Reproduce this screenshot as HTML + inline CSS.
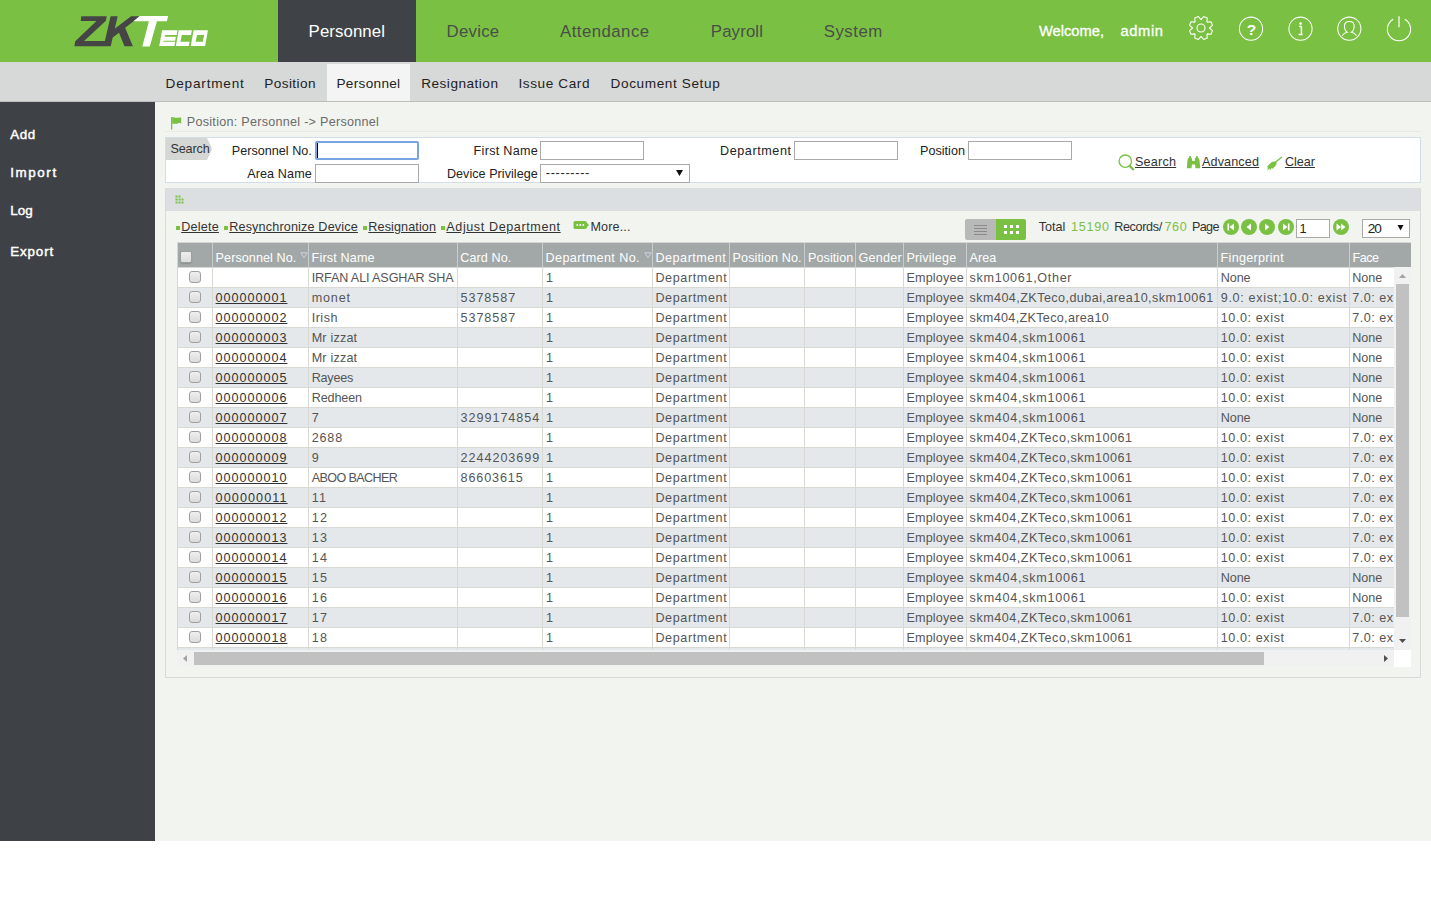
<!DOCTYPE html>
<html><head><meta charset="utf-8"><title>ZKTeco Personnel</title>
<style>
html,body{margin:0;padding:0;background:#fff;}
body{width:1431px;height:912px;position:relative;overflow:hidden;font-family:"Liberation Sans",sans-serif;}
.b{position:absolute;}
.t{position:absolute;white-space:pre;font-family:"Liberation Sans",sans-serif;}
</style></head><body>
<div class="b" style="left:0px;top:0px;width:1431px;height:62px;background:#7ac143"></div>
<div class="b" style="left:278px;top:0px;width:138px;height:62px;background:#3f4347"></div>
<span class="t" style="left:308.60px;top:23.78px;font-size:16.8px;line-height:16.8px;color:#fff;letter-spacing:0.089px;">Personnel</span>
<span class="t" style="left:446.60px;top:23.78px;font-size:16.8px;line-height:16.8px;color:#4a4e48;letter-spacing:0.255px;">Device</span>
<span class="t" style="left:560.00px;top:23.78px;font-size:16.8px;line-height:16.8px;color:#4a4e48;letter-spacing:0.466px;">Attendance</span>
<span class="t" style="left:710.80px;top:23.78px;font-size:16.8px;line-height:16.8px;color:#4a4e48;letter-spacing:0.146px;">Payroll</span>
<span class="t" style="left:823.80px;top:23.78px;font-size:16.8px;line-height:16.8px;color:#4a4e48;letter-spacing:0.494px;">System</span>
<span class="t" style="left:1039.00px;top:23.76px;font-size:14.7px;line-height:14.7px;color:#fff;letter-spacing:-0.007px;-webkit-text-stroke:0.3px #fff;">Welcome,</span>
<span class="t" style="left:1120.60px;top:23.76px;font-size:14.7px;line-height:14.7px;color:#fff;letter-spacing:0.586px;-webkit-text-stroke:0.3px #fff;">admin</span>
<svg class="b" style="left:0;top:0" width="230" height="62" viewBox="0 0 230 62">
<g fill="#454545">
<path d="M81.27,16.19 106.69,16.19 105.90,20.81 84.05,41.09 105.01,41.09 104.07,46.33 74.30,46.33 75.24,41.35 96.47,20.91 80.74,20.91 Z M110.62,16.19 117.69,16.19 110.72,46.33 103.65,46.33 Z M114.29,29.03 131.06,16.19 140.23,16.19 125.14,27.72 132.89,46.33 124.51,46.33 119.00,32.70 112.71,37.42 Z" fill-rule="nonzero"/>
</g>
<g fill="#fff">
<polygon points="139.74,16.01 168.11,16.01 166.96,21.17 156.93,21.17 149.77,46.38 142.32,46.38 148.91,21.17 133.44,21.17"/>
<path d="M162.09,30.34 L177.56,30.34 L176.70,34.92 L165.24,34.92 L164.67,36.64 L175.85,36.64 L175.16,40.65 L163.81,40.65 L163.24,41.80 L175.27,41.80 L174.41,46.10 L159.23,46.10 Z M178.71,30.34 L191.89,30.34 L191.03,34.92 L181.86,34.92 L180.43,41.80 L189.60,41.80 L188.74,46.10 L175.85,46.10 Z M193.61,30.34 L207.94,30.34 L205.07,46.10 L190.74,46.10 Z M197.05,34.92 L204.21,34.92 L202.78,41.80 L195.62,41.80 Z" fill-rule="evenodd"/>
</g>
</svg>
<svg class="b" style="left:1180px;top:0" width="251" height="62" viewBox="1180 0 251 62" fill="none" stroke="#fff" stroke-width="1.05">
<path d="M1201.28,19.40 L1203.61,16.49 L1207.29,18.02 L1206.88,21.72 L1207.28,22.12 L1210.98,21.71 L1212.51,25.39 L1209.60,27.72 L1209.60,28.28 L1212.51,30.61 L1210.98,34.29 L1207.28,33.88 L1206.88,34.28 L1207.29,37.98 L1203.61,39.51 L1201.28,36.60 L1200.72,36.60 L1198.39,39.51 L1194.71,37.98 L1195.12,34.28 L1194.72,33.88 L1191.02,34.29 L1189.49,30.61 L1192.40,28.28 L1192.40,27.72 L1189.49,25.39 L1191.02,21.71 L1194.72,22.12 L1195.12,21.72 L1194.71,18.02 L1198.39,16.49 L1200.72,19.40 Z" stroke-linejoin="round"/>
<circle cx="1201" cy="28" r="4"/>
<circle cx="1251" cy="28.7" r="11.6"/>
<circle cx="1300.5" cy="28.7" r="11.6"/>
<circle cx="1349.3" cy="28.7" r="11.6"/>
<path d="M1393.2,19.2 A11.6,11.6 0 1 0 1404.8,19.2"/>
<line x1="1399" y1="16.2" x2="1399" y2="27.2" stroke-width="1.2"/>
<text x="1251.5" y="34.8" fill="#fff" stroke="none" font-family="Liberation Sans" font-weight="bold" font-size="15.5" text-anchor="middle">?</text>
<circle cx="1300.6" cy="23.6" r="1.35" fill="#fff" stroke="none"/>
<path d="M1299,26.6 h2.4 v8 M1298.6,34.4 h4" stroke-width="1.5"/>
<path d="M1342.2,35.8 q1.6,-3 5,-3.6 q-2.8,-1.8 -2.8,-6 q0,-4.8 4.9,-4.8 q4.9,0 4.9,4.8 q0,4.2 -2.8,6 q3.4,0.6 5,3.6"/>
</svg>
<div class="b" style="left:0px;top:62px;width:1431px;height:39px;background:#d7d9d8"></div>
<div class="b" style="left:0px;top:101px;width:1431px;height:1px;background:#bdbdbd"></div>
<div class="b" style="left:327px;top:64px;width:83px;height:37px;background:#f4f4f4"></div>
<span class="t" style="left:165.60px;top:77.49px;font-size:13.6px;line-height:13.6px;color:#222;letter-spacing:0.804px;">Department</span>
<span class="t" style="left:264.30px;top:77.49px;font-size:13.6px;line-height:13.6px;color:#222;letter-spacing:0.398px;">Position</span>
<span class="t" style="left:336.50px;top:77.49px;font-size:13.6px;line-height:13.6px;color:#222;letter-spacing:0.304px;">Personnel</span>
<span class="t" style="left:421.20px;top:77.49px;font-size:13.6px;line-height:13.6px;color:#222;letter-spacing:0.499px;">Resignation</span>
<span class="t" style="left:518.40px;top:77.49px;font-size:13.6px;line-height:13.6px;color:#222;letter-spacing:0.594px;">Issue Card</span>
<span class="t" style="left:610.60px;top:77.49px;font-size:13.6px;line-height:13.6px;color:#222;letter-spacing:0.606px;">Document Setup</span>
<div class="b" style="left:0px;top:102px;width:155px;height:739px;background:#3e4246"></div>
<div class="b" style="left:155px;top:102px;width:1276px;height:739px;background:#f2f4f0"></div>
<span class="t" style="left:10.20px;top:127.66px;font-size:13.4px;line-height:13.4px;color:#fff;letter-spacing:0.574px;-webkit-text-stroke:0.45px #fff;">Add</span>
<span class="t" style="left:10.20px;top:166.46px;font-size:13.4px;line-height:13.4px;color:#fff;letter-spacing:1.602px;-webkit-text-stroke:0.45px #fff;">Import</span>
<span class="t" style="left:10.20px;top:204.46px;font-size:13.4px;line-height:13.4px;color:#fff;letter-spacing:0.061px;-webkit-text-stroke:0.45px #fff;">Log</span>
<span class="t" style="left:10.20px;top:244.86px;font-size:13.4px;line-height:13.4px;color:#fff;letter-spacing:0.855px;-webkit-text-stroke:0.45px #fff;">Export</span>
<svg class="b" style="left:170px;top:116px" width="12" height="14" viewBox="0 0 12 14"><rect x="1" y="1" width="1.3" height="12.5" fill="#7ac143"/><path d="M2.2,1.2 h2 l0.8,0.5 h3.5 l0.8,-0.3 h1.9 v6.8 l-0.7,-1.2 h-2 l-0.8,0.8 h-5.5 z" fill="#7ac143"/></svg>
<span class="t" style="left:186.80px;top:116.33px;font-size:12.6px;line-height:12.6px;color:#6b6b6b;letter-spacing:0.267px;">Position: Personnel -&gt; Personnel</span>
<div class="b" style="left:165px;top:131px;width:1256px;height:1px;background:#e8eae6"></div>
<div class="b" style="left:165px;top:137px;width:1256px;height:46px;background:#fff;border:1px solid #d3dde9;box-sizing:border-box"></div>
<svg class="b" style="left:166px;top:138px" width="48" height="22" viewBox="0 0 48 22"><path d="M0,0 H41 L45.5,9.5 Q46.2,11 45.5,12.5 L41,22 H0 Z" fill="#d5d7d4"/></svg>
<span class="t" style="left:170.40px;top:143.33px;font-size:12.6px;line-height:12.6px;color:#333;letter-spacing:-0.108px;">Search</span>
<span class="t" style="left:231.80px;top:145.33px;font-size:12.6px;line-height:12.6px;color:#222;letter-spacing:0.015px;">Personnel No.</span>
<span class="t" style="left:247.20px;top:168.33px;font-size:12.6px;line-height:12.6px;color:#222;letter-spacing:0.106px;">Area Name</span>
<span class="t" style="left:473.60px;top:145.33px;font-size:12.6px;line-height:12.6px;color:#222;letter-spacing:0.287px;">First Name</span>
<span class="t" style="left:446.90px;top:168.33px;font-size:12.6px;line-height:12.6px;color:#222;letter-spacing:0.037px;">Device Privilege</span>
<span class="t" style="left:720.00px;top:145.33px;font-size:12.6px;line-height:12.6px;color:#222;letter-spacing:0.574px;">Department</span>
<span class="t" style="left:920.00px;top:145.33px;font-size:12.6px;line-height:12.6px;color:#222;letter-spacing:0.021px;">Position</span>
<div class="b" style="left:315px;top:141px;width:104px;height:19px;background:#fff;border:2px solid #78a4e4;border-radius:2px;box-sizing:border-box"></div>
<div class="b" style="left:317px;top:143px;width:1px;height:15px;background:#000"></div>
<div class="b" style="left:315px;top:164px;width:104px;height:19px;background:#fff;border:1px solid #a9a9a9;box-sizing:border-box"></div>
<div class="b" style="left:540px;top:141px;width:104px;height:19px;background:#fff;border:1px solid #a9a9a9;box-sizing:border-box"></div>
<div class="b" style="left:540px;top:164px;width:150px;height:19px;background:#fff;border:1px solid #a9a9a9;box-sizing:border-box"></div>
<span class="t" style="left:545.80px;top:167.33px;font-size:12.6px;line-height:12.6px;color:#222;letter-spacing:0.720px;">---------</span>
<svg class="b" style="left:675px;top:169px" width="9" height="8" viewBox="0 0 9 8"><path d="M1,1 H8 L4.5,7 Z" fill="#111"/></svg>
<div class="b" style="left:794px;top:141px;width:104px;height:19px;background:#fff;border:1px solid #a9a9a9;box-sizing:border-box"></div>
<div class="b" style="left:968px;top:141px;width:104px;height:19px;background:#fff;border:1px solid #a9a9a9;box-sizing:border-box"></div>
<svg class="b" style="left:1116px;top:152px" width="20" height="20" viewBox="0 0 20 20"><circle cx="9.3" cy="9.2" r="6.2" fill="none" stroke="#7ac143" stroke-width="1.3"/><path d="M13.4,13.6 L17.8,18" stroke="#7ac143" stroke-width="2.2"/></svg>
<span class="t" style="left:1135.00px;top:156.13px;font-size:12.6px;line-height:12.6px;color:#333;letter-spacing:0.212px;text-decoration:underline;">Search</span>
<svg class="b" style="left:1186px;top:155px" width="15" height="15" viewBox="0 0 15 15"><path d="M0.8,13.2 L1.5,5 Q2,3 3,2.5 L3.5,1 L4.8,1 L5.2,2.6 Q6.3,3.5 6.3,6 L8.7,6 Q8.7,3.5 9.8,2.6 L10.2,1 L11.5,1 L12,2.5 Q13,3 13.5,5 L14.2,13.2 L9.5,13.2 L9,9.5 L6,9.5 L5.5,13.2 Z" fill="#7ac143"/></svg>
<span class="t" style="left:1202.00px;top:156.13px;font-size:12.6px;line-height:12.6px;color:#333;letter-spacing:0.133px;text-decoration:underline;">Advanced</span>
<svg class="b" style="left:1266px;top:155px" width="17" height="17" viewBox="0 0 17 17"><path d="M15.5,1.5 L16.3,2.4 L10.5,7.2 Q11,9.5 9,11.5 L6,14 L5.5,12.8 L4,15.8 L3.6,13.6 L1,15.5 L2.2,12.6 L0.8,12.2 Q3.5,8.5 5.5,7.2 Q7.5,6.2 9.2,6.6 Z" fill="#7ac143"/></svg>
<span class="t" style="left:1285.00px;top:156.13px;font-size:12.6px;line-height:12.6px;color:#333;letter-spacing:-0.029px;text-decoration:underline;">Clear</span>
<div class="b" style="left:165px;top:188px;width:1256px;height:490px;border:1px solid #d8dbd8;border-top:none;box-sizing:border-box"></div>
<div class="b" style="left:166px;top:188px;width:1254px;height:23px;background:#dcdfe1"></div>
<svg class="b" style="left:175px;top:195px" width="11" height="11" viewBox="0 0 11 11" fill="#7ac143"><rect x="0.5" y="0.5" width="2" height="2"/><rect x="3.5" y="0.5" width="2" height="2"/><rect x="0.5" y="3.5" width="2" height="2"/><rect x="3.5" y="3.5" width="2" height="2"/><rect x="6.5" y="3.5" width="2" height="2"/><rect x="0.5" y="6.5" width="2" height="2"/><rect x="3.5" y="6.5" width="2" height="2"/><rect x="6.5" y="6.5" width="2" height="2"/></svg>
<div class="b" style="left:176px;top:226px;width:3.5999999999999943px;height:3.8000000000000114px;background:#7ac143"></div>
<div class="b" style="left:224px;top:226px;width:3.5999999999999943px;height:3.8000000000000114px;background:#7ac143"></div>
<div class="b" style="left:363px;top:226px;width:3.6000000000000227px;height:3.8000000000000114px;background:#7ac143"></div>
<div class="b" style="left:441.3px;top:226px;width:3.6000000000000227px;height:3.8000000000000114px;background:#7ac143"></div>
<span class="t" style="left:181.20px;top:221.33px;font-size:12.6px;line-height:12.6px;color:#333;letter-spacing:0.217px;text-decoration:underline;">Delete</span>
<span class="t" style="left:229.20px;top:221.33px;font-size:12.6px;line-height:12.6px;color:#333;letter-spacing:0.170px;text-decoration:underline;">Resynchronize Device</span>
<span class="t" style="left:368.30px;top:221.33px;font-size:12.6px;line-height:12.6px;color:#333;letter-spacing:0.117px;text-decoration:underline;">Resignation</span>
<span class="t" style="left:446.30px;top:221.33px;font-size:12.6px;line-height:12.6px;color:#333;letter-spacing:0.592px;text-decoration:underline;">Adjust Department</span>
<svg class="b" style="left:573px;top:220px" width="17" height="11" viewBox="0 0 17 11"><path d="M2,1 H12 Q14,1 14,3 L16,5 L14,7 Q14,9 12,9 H2 Q0.5,9 0.5,7.5 V2.5 Q0.5,1 2,1 Z" fill="#7ac143"/><rect x="3.5" y="4" width="1.6" height="1.8" fill="#fff"/><rect x="6.5" y="4" width="1.6" height="1.8" fill="#fff"/><rect x="9.5" y="4" width="1.6" height="1.8" fill="#fff"/></svg>
<span class="t" style="left:590.50px;top:221.33px;font-size:12.6px;line-height:12.6px;color:#333;letter-spacing:0.119px;">More...</span>
<div class="b" style="left:965px;top:219px;width:31px;height:21px;background:#b9b9b9;border-radius:2px 0 0 2px"></div>
<div class="b" style="left:996px;top:219px;width:30px;height:21px;background:#7ac143;border-radius:0 2px 2px 0"></div>
<div class="b" style="left:974px;top:225px;width:13px;height:1px;background:#8a8a8a"></div>
<div class="b" style="left:974px;top:228px;width:13px;height:1px;background:#8a8a8a"></div>
<div class="b" style="left:974px;top:231px;width:13px;height:1px;background:#8a8a8a"></div>
<div class="b" style="left:974px;top:234px;width:13px;height:1px;background:#8a8a8a"></div>
<div class="b" style="left:1004px;top:225px;width:3px;height:3px;background:#fff"></div>
<div class="b" style="left:1010px;top:225px;width:3px;height:3px;background:#fff"></div>
<div class="b" style="left:1016px;top:225px;width:3px;height:3px;background:#fff"></div>
<div class="b" style="left:1004px;top:231px;width:3px;height:3px;background:#fff"></div>
<div class="b" style="left:1010px;top:231px;width:3px;height:3px;background:#fff"></div>
<div class="b" style="left:1016px;top:231px;width:3px;height:3px;background:#fff"></div>
<span class="t" style="left:1038.70px;top:221.33px;font-size:12.6px;line-height:12.6px;color:#333;letter-spacing:0.004px;">Total</span>
<span class="t" style="left:1071.00px;top:221.33px;font-size:12.6px;line-height:12.6px;color:#7ac143;letter-spacing:0.743px;">15190</span>
<span class="t" style="left:1114.20px;top:221.33px;font-size:12.6px;line-height:12.6px;color:#333;letter-spacing:-0.338px;">Records/</span>
<span class="t" style="left:1164.50px;top:221.33px;font-size:12.6px;line-height:12.6px;color:#7ac143;letter-spacing:0.579px;">760</span>
<span class="t" style="left:1192.00px;top:221.33px;font-size:12.6px;line-height:12.6px;color:#333;letter-spacing:-0.640px;">Page</span>
<svg class="b" style="left:1223px;top:219px" width="16" height="16" viewBox="0 0 16 16"><circle cx="8" cy="8" r="8" fill="#7ac143"/><rect x="4.5" y="4.5" width="1.6" height="7" fill="#fff"/><path d="M11,4.5 V11.5 L6.5,8 Z" fill="#fff"/></svg>
<svg class="b" style="left:1241px;top:219px" width="16" height="16" viewBox="0 0 16 16"><circle cx="8" cy="8" r="8" fill="#7ac143"/><path d="M10,4.5 V11.5 L5.5,8 Z" fill="#fff"/></svg>
<svg class="b" style="left:1259px;top:219px" width="16" height="16" viewBox="0 0 16 16"><circle cx="8" cy="8" r="8" fill="#7ac143"/><path d="M6,4.5 V11.5 L10.5,8 Z" fill="#fff"/></svg>
<svg class="b" style="left:1277.5px;top:219px" width="16" height="16" viewBox="0 0 16 16"><circle cx="8" cy="8" r="8" fill="#7ac143"/><rect x="9.9" y="4.5" width="1.6" height="7" fill="#fff"/><path d="M5,4.5 V11.5 L9.5,8 Z" fill="#fff"/></svg>
<div class="b" style="left:1296px;top:219px;width:34px;height:19px;background:#fff;border:1px solid #a9a9a9;box-sizing:border-box"></div>
<span class="t" style="left:1299.50px;top:222.93px;font-size:12.6px;line-height:12.6px;color:#222;letter-spacing:0.000px;">1</span>
<svg class="b" style="left:1333px;top:219px" width="16" height="16" viewBox="0 0 16 16"><circle cx="8" cy="8" r="8" fill="#7ac143"/><path d="M3.5,4.5 V11.5 L8,8 Z M8,4.5 V11.5 L12.5,8 Z" fill="#fff"/></svg>
<div class="b" style="left:1362px;top:219px;width:48px;height:19px;background:#fff;border:1px solid #a9a9a9;box-sizing:border-box"></div>
<span class="t" style="left:1367.80px;top:222.09px;font-size:13.6px;line-height:13.6px;color:#222;letter-spacing:-1.096px;">20</span>
<svg class="b" style="left:1397px;top:224px" width="8" height="8" viewBox="0 0 8 8"><path d="M0.5,1 H6.5 L3.5,6.5 Z" fill="#111"/></svg>
<div class="b" style="left:177px;top:242px;width:1px;height:408px;background:#d3d6d2"></div>
<div class="b" style="left:178px;top:242px;width:1233px;height:1px;background:#d3d6d2"></div>
<div class="b" style="left:178px;top:243px;width:1233px;height:24px;background:#a2a8a7"></div>
<div class="b" style="left:178px;top:267px;width:1216px;height:1px;background:#d8d9d4"></div>
<div class="b" style="left:212px;top:243px;width:1px;height:24px;background:#c9cdcc"></div>
<div class="b" style="left:308px;top:243px;width:1px;height:24px;background:#c9cdcc"></div>
<div class="b" style="left:457px;top:243px;width:1px;height:24px;background:#c9cdcc"></div>
<div class="b" style="left:542px;top:243px;width:1px;height:24px;background:#c9cdcc"></div>
<div class="b" style="left:652px;top:243px;width:1px;height:24px;background:#c9cdcc"></div>
<div class="b" style="left:729px;top:243px;width:1px;height:24px;background:#c9cdcc"></div>
<div class="b" style="left:804px;top:243px;width:1px;height:24px;background:#c9cdcc"></div>
<div class="b" style="left:855px;top:243px;width:1px;height:24px;background:#c9cdcc"></div>
<div class="b" style="left:903px;top:243px;width:1px;height:24px;background:#c9cdcc"></div>
<div class="b" style="left:966px;top:243px;width:1px;height:24px;background:#c9cdcc"></div>
<div class="b" style="left:1217px;top:243px;width:1px;height:24px;background:#c9cdcc"></div>
<div class="b" style="left:1349px;top:243px;width:1px;height:24px;background:#c9cdcc"></div>
<div class="b" style="left:180px;top:251px;width:12px;height:12px;box-sizing:border-box;border:1px solid #9aa0a0;border-radius:2px;background:linear-gradient(#eeeeee,#dcdcdc);box-shadow:0 1px 1px #8c9090"></div>
<span class="t" style="left:215.60px;top:252.33px;font-size:12.6px;line-height:12.6px;color:#fff;letter-spacing:0.073px;">Personnel No.</span>
<span class="t" style="left:311.60px;top:252.33px;font-size:12.6px;line-height:12.6px;color:#fff;letter-spacing:0.159px;">First Name</span>
<span class="t" style="left:460.30px;top:252.33px;font-size:12.6px;line-height:12.6px;color:#fff;letter-spacing:0.095px;">Card No.</span>
<span class="t" style="left:545.50px;top:252.33px;font-size:12.6px;line-height:12.6px;color:#fff;letter-spacing:0.395px;">Department No.</span>
<span class="t" style="left:655.50px;top:252.33px;font-size:12.6px;line-height:12.6px;color:#fff;letter-spacing:0.506px;">Department</span>
<span class="t" style="left:732.60px;top:252.33px;font-size:12.6px;line-height:12.6px;color:#fff;letter-spacing:0.091px;">Position No.</span>
<span class="t" style="left:808.00px;top:252.33px;font-size:12.6px;line-height:12.6px;color:#fff;letter-spacing:0.073px;">Position</span>
<span class="t" style="left:858.60px;top:252.33px;font-size:12.6px;line-height:12.6px;color:#fff;letter-spacing:0.208px;">Gender</span>
<span class="t" style="left:906.40px;top:252.33px;font-size:12.6px;line-height:12.6px;color:#fff;letter-spacing:0.195px;">Privilege</span>
<span class="t" style="left:969.40px;top:252.33px;font-size:12.6px;line-height:12.6px;color:#fff;letter-spacing:0.099px;">Area</span>
<span class="t" style="left:1220.60px;top:252.33px;font-size:12.6px;line-height:12.6px;color:#fff;letter-spacing:0.286px;">Fingerprint</span>
<span class="t" style="left:1352.50px;top:252.33px;font-size:12.6px;line-height:12.6px;color:#fff;letter-spacing:-0.520px;">Face</span>
<svg class="b" style="left:299.5px;top:252px" width="8" height="7" viewBox="0 0 8 7"><path d="M0.8,0.8 H7.2 L4,5.8 Z" fill="none" stroke="#c9d3e0" stroke-width="1"/></svg>
<svg class="b" style="left:643.5px;top:252px" width="8" height="7" viewBox="0 0 8 7"><path d="M0.8,0.8 H7.2 L4,5.8 Z" fill="none" stroke="#c9d3e0" stroke-width="1"/></svg>
<div class="b" style="left:178px;top:268px;width:1216px;height:382px;overflow:hidden">
<div class="b" style="left:0px;top:0px;width:1216px;height:19px;background:#ffffff"></div>
<div class="b" style="left:0px;top:19px;width:1216px;height:1px;background:#d9d9d3"></div>
<div class="b" style="left:34px;top:0px;width:1px;height:19px;background:#d9d9d3"></div>
<div class="b" style="left:130px;top:0px;width:1px;height:19px;background:#d9d9d3"></div>
<div class="b" style="left:279px;top:0px;width:1px;height:19px;background:#d9d9d3"></div>
<div class="b" style="left:364px;top:0px;width:1px;height:19px;background:#d9d9d3"></div>
<div class="b" style="left:474px;top:0px;width:1px;height:19px;background:#d9d9d3"></div>
<div class="b" style="left:551px;top:0px;width:1px;height:19px;background:#d9d9d3"></div>
<div class="b" style="left:626px;top:0px;width:1px;height:19px;background:#d9d9d3"></div>
<div class="b" style="left:677px;top:0px;width:1px;height:19px;background:#d9d9d3"></div>
<div class="b" style="left:725px;top:0px;width:1px;height:19px;background:#d9d9d3"></div>
<div class="b" style="left:788px;top:0px;width:1px;height:19px;background:#d9d9d3"></div>
<div class="b" style="left:1039px;top:0px;width:1px;height:19px;background:#d9d9d3"></div>
<div class="b" style="left:1171px;top:0px;width:1px;height:19px;background:#d9d9d3"></div>
<div class="b" style="left:11px;top:3px;width:12px;height:12px;box-sizing:border-box;border:1.5px solid #a0a0a0;border-radius:3px;background:linear-gradient(#f0f0f0,#dadada)"></div>
<span class="t" style="left:133.70px;top:3.83px;font-size:12.6px;line-height:12.6px;color:#555;letter-spacing:-0.119px;">IRFAN ALI ASGHAR SHA</span>
<span class="t" style="left:368.00px;top:3.83px;font-size:12.6px;line-height:12.6px;color:#555;letter-spacing:0.000px;">1</span>
<span class="t" style="left:477.40px;top:3.83px;font-size:12.6px;line-height:12.6px;color:#555;letter-spacing:0.607px;">Department</span>
<span class="t" style="left:728.40px;top:3.83px;font-size:12.6px;line-height:12.6px;color:#555;letter-spacing:0.185px;">Employee</span>
<span class="t" style="left:791.60px;top:3.83px;font-size:12.6px;line-height:12.6px;color:#555;letter-spacing:0.679px;">skm10061,Other</span>
<span class="t" style="left:1042.70px;top:3.83px;font-size:12.6px;line-height:12.6px;color:#555;letter-spacing:-0.071px;">None</span>
<span class="t" style="left:1174.30px;top:3.83px;font-size:12.6px;line-height:12.6px;color:#555;letter-spacing:-0.071px;">None</span>
<div class="b" style="left:0px;top:20px;width:1216px;height:19px;background:#e5e8ea"></div>
<div class="b" style="left:0px;top:39px;width:1216px;height:1px;background:#d9d9d3"></div>
<div class="b" style="left:34px;top:20px;width:1px;height:19px;background:#d9d9d3"></div>
<div class="b" style="left:130px;top:20px;width:1px;height:19px;background:#d9d9d3"></div>
<div class="b" style="left:279px;top:20px;width:1px;height:19px;background:#d9d9d3"></div>
<div class="b" style="left:364px;top:20px;width:1px;height:19px;background:#d9d9d3"></div>
<div class="b" style="left:474px;top:20px;width:1px;height:19px;background:#d9d9d3"></div>
<div class="b" style="left:551px;top:20px;width:1px;height:19px;background:#d9d9d3"></div>
<div class="b" style="left:626px;top:20px;width:1px;height:19px;background:#d9d9d3"></div>
<div class="b" style="left:677px;top:20px;width:1px;height:19px;background:#d9d9d3"></div>
<div class="b" style="left:725px;top:20px;width:1px;height:19px;background:#d9d9d3"></div>
<div class="b" style="left:788px;top:20px;width:1px;height:19px;background:#d9d9d3"></div>
<div class="b" style="left:1039px;top:20px;width:1px;height:19px;background:#d9d9d3"></div>
<div class="b" style="left:1171px;top:20px;width:1px;height:19px;background:#d9d9d3"></div>
<div class="b" style="left:11px;top:23px;width:12px;height:12px;box-sizing:border-box;border:1.5px solid #a0a0a0;border-radius:3px;background:linear-gradient(#f0f0f0,#dadada)"></div>
<span class="t" style="left:37.60px;top:23.83px;font-size:12.6px;line-height:12.6px;color:#333;letter-spacing:0.980px;text-decoration:underline;">000000001</span>
<span class="t" style="left:133.70px;top:23.83px;font-size:12.6px;line-height:12.6px;color:#555;letter-spacing:0.843px;">monet</span>
<span class="t" style="left:282.50px;top:23.83px;font-size:12.6px;line-height:12.6px;color:#555;letter-spacing:0.954px;">5378587</span>
<span class="t" style="left:368.00px;top:23.83px;font-size:12.6px;line-height:12.6px;color:#555;letter-spacing:0.000px;">1</span>
<span class="t" style="left:477.40px;top:23.83px;font-size:12.6px;line-height:12.6px;color:#555;letter-spacing:0.607px;">Department</span>
<span class="t" style="left:728.40px;top:23.83px;font-size:12.6px;line-height:12.6px;color:#555;letter-spacing:0.185px;">Employee</span>
<span class="t" style="left:791.60px;top:23.83px;font-size:12.6px;line-height:12.6px;color:#555;letter-spacing:0.430px;">skm404,ZKTeco,dubai,area10,skm10061</span>
<span class="t" style="left:1042.70px;top:23.83px;font-size:12.6px;line-height:12.6px;color:#555;letter-spacing:0.686px;">9.0: exist;10.0: exist</span>
<span class="t" style="left:1174.30px;top:23.83px;font-size:12.6px;line-height:12.6px;color:#555;letter-spacing:0.496px;">7.0: exist</span>
<div class="b" style="left:0px;top:40px;width:1216px;height:19px;background:#ffffff"></div>
<div class="b" style="left:0px;top:59px;width:1216px;height:1px;background:#d9d9d3"></div>
<div class="b" style="left:34px;top:40px;width:1px;height:19px;background:#d9d9d3"></div>
<div class="b" style="left:130px;top:40px;width:1px;height:19px;background:#d9d9d3"></div>
<div class="b" style="left:279px;top:40px;width:1px;height:19px;background:#d9d9d3"></div>
<div class="b" style="left:364px;top:40px;width:1px;height:19px;background:#d9d9d3"></div>
<div class="b" style="left:474px;top:40px;width:1px;height:19px;background:#d9d9d3"></div>
<div class="b" style="left:551px;top:40px;width:1px;height:19px;background:#d9d9d3"></div>
<div class="b" style="left:626px;top:40px;width:1px;height:19px;background:#d9d9d3"></div>
<div class="b" style="left:677px;top:40px;width:1px;height:19px;background:#d9d9d3"></div>
<div class="b" style="left:725px;top:40px;width:1px;height:19px;background:#d9d9d3"></div>
<div class="b" style="left:788px;top:40px;width:1px;height:19px;background:#d9d9d3"></div>
<div class="b" style="left:1039px;top:40px;width:1px;height:19px;background:#d9d9d3"></div>
<div class="b" style="left:1171px;top:40px;width:1px;height:19px;background:#d9d9d3"></div>
<div class="b" style="left:11px;top:43px;width:12px;height:12px;box-sizing:border-box;border:1.5px solid #a0a0a0;border-radius:3px;background:linear-gradient(#f0f0f0,#dadada)"></div>
<span class="t" style="left:37.60px;top:43.83px;font-size:12.6px;line-height:12.6px;color:#333;letter-spacing:0.980px;text-decoration:underline;">000000002</span>
<span class="t" style="left:133.70px;top:43.83px;font-size:12.6px;line-height:12.6px;color:#555;letter-spacing:0.497px;">Irish</span>
<span class="t" style="left:282.50px;top:43.83px;font-size:12.6px;line-height:12.6px;color:#555;letter-spacing:0.954px;">5378587</span>
<span class="t" style="left:368.00px;top:43.83px;font-size:12.6px;line-height:12.6px;color:#555;letter-spacing:0.000px;">1</span>
<span class="t" style="left:477.40px;top:43.83px;font-size:12.6px;line-height:12.6px;color:#555;letter-spacing:0.607px;">Department</span>
<span class="t" style="left:728.40px;top:43.83px;font-size:12.6px;line-height:12.6px;color:#555;letter-spacing:0.185px;">Employee</span>
<span class="t" style="left:791.60px;top:43.83px;font-size:12.6px;line-height:12.6px;color:#555;letter-spacing:0.323px;">skm404,ZKTeco,area10</span>
<span class="t" style="left:1042.70px;top:43.83px;font-size:12.6px;line-height:12.6px;color:#555;letter-spacing:0.594px;">10.0: exist</span>
<span class="t" style="left:1174.30px;top:43.83px;font-size:12.6px;line-height:12.6px;color:#555;letter-spacing:0.496px;">7.0: exist</span>
<div class="b" style="left:0px;top:60px;width:1216px;height:19px;background:#e5e8ea"></div>
<div class="b" style="left:0px;top:79px;width:1216px;height:1px;background:#d9d9d3"></div>
<div class="b" style="left:34px;top:60px;width:1px;height:19px;background:#d9d9d3"></div>
<div class="b" style="left:130px;top:60px;width:1px;height:19px;background:#d9d9d3"></div>
<div class="b" style="left:279px;top:60px;width:1px;height:19px;background:#d9d9d3"></div>
<div class="b" style="left:364px;top:60px;width:1px;height:19px;background:#d9d9d3"></div>
<div class="b" style="left:474px;top:60px;width:1px;height:19px;background:#d9d9d3"></div>
<div class="b" style="left:551px;top:60px;width:1px;height:19px;background:#d9d9d3"></div>
<div class="b" style="left:626px;top:60px;width:1px;height:19px;background:#d9d9d3"></div>
<div class="b" style="left:677px;top:60px;width:1px;height:19px;background:#d9d9d3"></div>
<div class="b" style="left:725px;top:60px;width:1px;height:19px;background:#d9d9d3"></div>
<div class="b" style="left:788px;top:60px;width:1px;height:19px;background:#d9d9d3"></div>
<div class="b" style="left:1039px;top:60px;width:1px;height:19px;background:#d9d9d3"></div>
<div class="b" style="left:1171px;top:60px;width:1px;height:19px;background:#d9d9d3"></div>
<div class="b" style="left:11px;top:63px;width:12px;height:12px;box-sizing:border-box;border:1.5px solid #a0a0a0;border-radius:3px;background:linear-gradient(#f0f0f0,#dadada)"></div>
<span class="t" style="left:37.60px;top:63.83px;font-size:12.6px;line-height:12.6px;color:#333;letter-spacing:0.980px;text-decoration:underline;">000000003</span>
<span class="t" style="left:133.70px;top:63.83px;font-size:12.6px;line-height:12.6px;color:#555;letter-spacing:0.186px;">Mr izzat</span>
<span class="t" style="left:368.00px;top:63.83px;font-size:12.6px;line-height:12.6px;color:#555;letter-spacing:0.000px;">1</span>
<span class="t" style="left:477.40px;top:63.83px;font-size:12.6px;line-height:12.6px;color:#555;letter-spacing:0.607px;">Department</span>
<span class="t" style="left:728.40px;top:63.83px;font-size:12.6px;line-height:12.6px;color:#555;letter-spacing:0.185px;">Employee</span>
<span class="t" style="left:791.60px;top:63.83px;font-size:12.6px;line-height:12.6px;color:#555;letter-spacing:0.730px;">skm404,skm10061</span>
<span class="t" style="left:1042.70px;top:63.83px;font-size:12.6px;line-height:12.6px;color:#555;letter-spacing:0.594px;">10.0: exist</span>
<span class="t" style="left:1174.30px;top:63.83px;font-size:12.6px;line-height:12.6px;color:#555;letter-spacing:-0.071px;">None</span>
<div class="b" style="left:0px;top:80px;width:1216px;height:19px;background:#ffffff"></div>
<div class="b" style="left:0px;top:99px;width:1216px;height:1px;background:#d9d9d3"></div>
<div class="b" style="left:34px;top:80px;width:1px;height:19px;background:#d9d9d3"></div>
<div class="b" style="left:130px;top:80px;width:1px;height:19px;background:#d9d9d3"></div>
<div class="b" style="left:279px;top:80px;width:1px;height:19px;background:#d9d9d3"></div>
<div class="b" style="left:364px;top:80px;width:1px;height:19px;background:#d9d9d3"></div>
<div class="b" style="left:474px;top:80px;width:1px;height:19px;background:#d9d9d3"></div>
<div class="b" style="left:551px;top:80px;width:1px;height:19px;background:#d9d9d3"></div>
<div class="b" style="left:626px;top:80px;width:1px;height:19px;background:#d9d9d3"></div>
<div class="b" style="left:677px;top:80px;width:1px;height:19px;background:#d9d9d3"></div>
<div class="b" style="left:725px;top:80px;width:1px;height:19px;background:#d9d9d3"></div>
<div class="b" style="left:788px;top:80px;width:1px;height:19px;background:#d9d9d3"></div>
<div class="b" style="left:1039px;top:80px;width:1px;height:19px;background:#d9d9d3"></div>
<div class="b" style="left:1171px;top:80px;width:1px;height:19px;background:#d9d9d3"></div>
<div class="b" style="left:11px;top:83px;width:12px;height:12px;box-sizing:border-box;border:1.5px solid #a0a0a0;border-radius:3px;background:linear-gradient(#f0f0f0,#dadada)"></div>
<span class="t" style="left:37.60px;top:83.83px;font-size:12.6px;line-height:12.6px;color:#333;letter-spacing:0.980px;text-decoration:underline;">000000004</span>
<span class="t" style="left:133.70px;top:83.83px;font-size:12.6px;line-height:12.6px;color:#555;letter-spacing:0.186px;">Mr izzat</span>
<span class="t" style="left:368.00px;top:83.83px;font-size:12.6px;line-height:12.6px;color:#555;letter-spacing:0.000px;">1</span>
<span class="t" style="left:477.40px;top:83.83px;font-size:12.6px;line-height:12.6px;color:#555;letter-spacing:0.607px;">Department</span>
<span class="t" style="left:728.40px;top:83.83px;font-size:12.6px;line-height:12.6px;color:#555;letter-spacing:0.185px;">Employee</span>
<span class="t" style="left:791.60px;top:83.83px;font-size:12.6px;line-height:12.6px;color:#555;letter-spacing:0.730px;">skm404,skm10061</span>
<span class="t" style="left:1042.70px;top:83.83px;font-size:12.6px;line-height:12.6px;color:#555;letter-spacing:0.594px;">10.0: exist</span>
<span class="t" style="left:1174.30px;top:83.83px;font-size:12.6px;line-height:12.6px;color:#555;letter-spacing:-0.071px;">None</span>
<div class="b" style="left:0px;top:100px;width:1216px;height:19px;background:#e5e8ea"></div>
<div class="b" style="left:0px;top:119px;width:1216px;height:1px;background:#d9d9d3"></div>
<div class="b" style="left:34px;top:100px;width:1px;height:19px;background:#d9d9d3"></div>
<div class="b" style="left:130px;top:100px;width:1px;height:19px;background:#d9d9d3"></div>
<div class="b" style="left:279px;top:100px;width:1px;height:19px;background:#d9d9d3"></div>
<div class="b" style="left:364px;top:100px;width:1px;height:19px;background:#d9d9d3"></div>
<div class="b" style="left:474px;top:100px;width:1px;height:19px;background:#d9d9d3"></div>
<div class="b" style="left:551px;top:100px;width:1px;height:19px;background:#d9d9d3"></div>
<div class="b" style="left:626px;top:100px;width:1px;height:19px;background:#d9d9d3"></div>
<div class="b" style="left:677px;top:100px;width:1px;height:19px;background:#d9d9d3"></div>
<div class="b" style="left:725px;top:100px;width:1px;height:19px;background:#d9d9d3"></div>
<div class="b" style="left:788px;top:100px;width:1px;height:19px;background:#d9d9d3"></div>
<div class="b" style="left:1039px;top:100px;width:1px;height:19px;background:#d9d9d3"></div>
<div class="b" style="left:1171px;top:100px;width:1px;height:19px;background:#d9d9d3"></div>
<div class="b" style="left:11px;top:103px;width:12px;height:12px;box-sizing:border-box;border:1.5px solid #a0a0a0;border-radius:3px;background:linear-gradient(#f0f0f0,#dadada)"></div>
<span class="t" style="left:37.60px;top:103.83px;font-size:12.6px;line-height:12.6px;color:#333;letter-spacing:0.980px;text-decoration:underline;">000000005</span>
<span class="t" style="left:133.70px;top:103.83px;font-size:12.6px;line-height:12.6px;color:#555;letter-spacing:-0.223px;">Rayees</span>
<span class="t" style="left:368.00px;top:103.83px;font-size:12.6px;line-height:12.6px;color:#555;letter-spacing:0.000px;">1</span>
<span class="t" style="left:477.40px;top:103.83px;font-size:12.6px;line-height:12.6px;color:#555;letter-spacing:0.607px;">Department</span>
<span class="t" style="left:728.40px;top:103.83px;font-size:12.6px;line-height:12.6px;color:#555;letter-spacing:0.185px;">Employee</span>
<span class="t" style="left:791.60px;top:103.83px;font-size:12.6px;line-height:12.6px;color:#555;letter-spacing:0.730px;">skm404,skm10061</span>
<span class="t" style="left:1042.70px;top:103.83px;font-size:12.6px;line-height:12.6px;color:#555;letter-spacing:0.594px;">10.0: exist</span>
<span class="t" style="left:1174.30px;top:103.83px;font-size:12.6px;line-height:12.6px;color:#555;letter-spacing:-0.071px;">None</span>
<div class="b" style="left:0px;top:120px;width:1216px;height:19px;background:#ffffff"></div>
<div class="b" style="left:0px;top:139px;width:1216px;height:1px;background:#d9d9d3"></div>
<div class="b" style="left:34px;top:120px;width:1px;height:19px;background:#d9d9d3"></div>
<div class="b" style="left:130px;top:120px;width:1px;height:19px;background:#d9d9d3"></div>
<div class="b" style="left:279px;top:120px;width:1px;height:19px;background:#d9d9d3"></div>
<div class="b" style="left:364px;top:120px;width:1px;height:19px;background:#d9d9d3"></div>
<div class="b" style="left:474px;top:120px;width:1px;height:19px;background:#d9d9d3"></div>
<div class="b" style="left:551px;top:120px;width:1px;height:19px;background:#d9d9d3"></div>
<div class="b" style="left:626px;top:120px;width:1px;height:19px;background:#d9d9d3"></div>
<div class="b" style="left:677px;top:120px;width:1px;height:19px;background:#d9d9d3"></div>
<div class="b" style="left:725px;top:120px;width:1px;height:19px;background:#d9d9d3"></div>
<div class="b" style="left:788px;top:120px;width:1px;height:19px;background:#d9d9d3"></div>
<div class="b" style="left:1039px;top:120px;width:1px;height:19px;background:#d9d9d3"></div>
<div class="b" style="left:1171px;top:120px;width:1px;height:19px;background:#d9d9d3"></div>
<div class="b" style="left:11px;top:123px;width:12px;height:12px;box-sizing:border-box;border:1.5px solid #a0a0a0;border-radius:3px;background:linear-gradient(#f0f0f0,#dadada)"></div>
<span class="t" style="left:37.60px;top:123.83px;font-size:12.6px;line-height:12.6px;color:#333;letter-spacing:0.980px;text-decoration:underline;">000000006</span>
<span class="t" style="left:133.70px;top:123.83px;font-size:12.6px;line-height:12.6px;color:#555;letter-spacing:-0.126px;">Redheen</span>
<span class="t" style="left:368.00px;top:123.83px;font-size:12.6px;line-height:12.6px;color:#555;letter-spacing:0.000px;">1</span>
<span class="t" style="left:477.40px;top:123.83px;font-size:12.6px;line-height:12.6px;color:#555;letter-spacing:0.607px;">Department</span>
<span class="t" style="left:728.40px;top:123.83px;font-size:12.6px;line-height:12.6px;color:#555;letter-spacing:0.185px;">Employee</span>
<span class="t" style="left:791.60px;top:123.83px;font-size:12.6px;line-height:12.6px;color:#555;letter-spacing:0.730px;">skm404,skm10061</span>
<span class="t" style="left:1042.70px;top:123.83px;font-size:12.6px;line-height:12.6px;color:#555;letter-spacing:0.594px;">10.0: exist</span>
<span class="t" style="left:1174.30px;top:123.83px;font-size:12.6px;line-height:12.6px;color:#555;letter-spacing:-0.071px;">None</span>
<div class="b" style="left:0px;top:140px;width:1216px;height:19px;background:#e5e8ea"></div>
<div class="b" style="left:0px;top:159px;width:1216px;height:1px;background:#d9d9d3"></div>
<div class="b" style="left:34px;top:140px;width:1px;height:19px;background:#d9d9d3"></div>
<div class="b" style="left:130px;top:140px;width:1px;height:19px;background:#d9d9d3"></div>
<div class="b" style="left:279px;top:140px;width:1px;height:19px;background:#d9d9d3"></div>
<div class="b" style="left:364px;top:140px;width:1px;height:19px;background:#d9d9d3"></div>
<div class="b" style="left:474px;top:140px;width:1px;height:19px;background:#d9d9d3"></div>
<div class="b" style="left:551px;top:140px;width:1px;height:19px;background:#d9d9d3"></div>
<div class="b" style="left:626px;top:140px;width:1px;height:19px;background:#d9d9d3"></div>
<div class="b" style="left:677px;top:140px;width:1px;height:19px;background:#d9d9d3"></div>
<div class="b" style="left:725px;top:140px;width:1px;height:19px;background:#d9d9d3"></div>
<div class="b" style="left:788px;top:140px;width:1px;height:19px;background:#d9d9d3"></div>
<div class="b" style="left:1039px;top:140px;width:1px;height:19px;background:#d9d9d3"></div>
<div class="b" style="left:1171px;top:140px;width:1px;height:19px;background:#d9d9d3"></div>
<div class="b" style="left:11px;top:143px;width:12px;height:12px;box-sizing:border-box;border:1.5px solid #a0a0a0;border-radius:3px;background:linear-gradient(#f0f0f0,#dadada)"></div>
<span class="t" style="left:37.60px;top:143.83px;font-size:12.6px;line-height:12.6px;color:#333;letter-spacing:0.980px;text-decoration:underline;">000000007</span>
<span class="t" style="left:133.70px;top:143.83px;font-size:12.6px;line-height:12.6px;color:#555;letter-spacing:0.000px;">7</span>
<span class="t" style="left:282.50px;top:143.83px;font-size:12.6px;line-height:12.6px;color:#555;letter-spacing:0.972px;">3299174854</span>
<span class="t" style="left:368.00px;top:143.83px;font-size:12.6px;line-height:12.6px;color:#555;letter-spacing:0.000px;">1</span>
<span class="t" style="left:477.40px;top:143.83px;font-size:12.6px;line-height:12.6px;color:#555;letter-spacing:0.607px;">Department</span>
<span class="t" style="left:728.40px;top:143.83px;font-size:12.6px;line-height:12.6px;color:#555;letter-spacing:0.185px;">Employee</span>
<span class="t" style="left:791.60px;top:143.83px;font-size:12.6px;line-height:12.6px;color:#555;letter-spacing:0.730px;">skm404,skm10061</span>
<span class="t" style="left:1042.70px;top:143.83px;font-size:12.6px;line-height:12.6px;color:#555;letter-spacing:-0.071px;">None</span>
<span class="t" style="left:1174.30px;top:143.83px;font-size:12.6px;line-height:12.6px;color:#555;letter-spacing:-0.071px;">None</span>
<div class="b" style="left:0px;top:160px;width:1216px;height:19px;background:#ffffff"></div>
<div class="b" style="left:0px;top:179px;width:1216px;height:1px;background:#d9d9d3"></div>
<div class="b" style="left:34px;top:160px;width:1px;height:19px;background:#d9d9d3"></div>
<div class="b" style="left:130px;top:160px;width:1px;height:19px;background:#d9d9d3"></div>
<div class="b" style="left:279px;top:160px;width:1px;height:19px;background:#d9d9d3"></div>
<div class="b" style="left:364px;top:160px;width:1px;height:19px;background:#d9d9d3"></div>
<div class="b" style="left:474px;top:160px;width:1px;height:19px;background:#d9d9d3"></div>
<div class="b" style="left:551px;top:160px;width:1px;height:19px;background:#d9d9d3"></div>
<div class="b" style="left:626px;top:160px;width:1px;height:19px;background:#d9d9d3"></div>
<div class="b" style="left:677px;top:160px;width:1px;height:19px;background:#d9d9d3"></div>
<div class="b" style="left:725px;top:160px;width:1px;height:19px;background:#d9d9d3"></div>
<div class="b" style="left:788px;top:160px;width:1px;height:19px;background:#d9d9d3"></div>
<div class="b" style="left:1039px;top:160px;width:1px;height:19px;background:#d9d9d3"></div>
<div class="b" style="left:1171px;top:160px;width:1px;height:19px;background:#d9d9d3"></div>
<div class="b" style="left:11px;top:163px;width:12px;height:12px;box-sizing:border-box;border:1.5px solid #a0a0a0;border-radius:3px;background:linear-gradient(#f0f0f0,#dadada)"></div>
<span class="t" style="left:37.60px;top:163.83px;font-size:12.6px;line-height:12.6px;color:#333;letter-spacing:0.980px;text-decoration:underline;">000000008</span>
<span class="t" style="left:133.70px;top:163.83px;font-size:12.6px;line-height:12.6px;color:#555;letter-spacing:0.822px;">2688</span>
<span class="t" style="left:368.00px;top:163.83px;font-size:12.6px;line-height:12.6px;color:#555;letter-spacing:0.000px;">1</span>
<span class="t" style="left:477.40px;top:163.83px;font-size:12.6px;line-height:12.6px;color:#555;letter-spacing:0.607px;">Department</span>
<span class="t" style="left:728.40px;top:163.83px;font-size:12.6px;line-height:12.6px;color:#555;letter-spacing:0.185px;">Employee</span>
<span class="t" style="left:791.60px;top:163.83px;font-size:12.6px;line-height:12.6px;color:#555;letter-spacing:0.502px;">skm404,ZKTeco,skm10061</span>
<span class="t" style="left:1042.70px;top:163.83px;font-size:12.6px;line-height:12.6px;color:#555;letter-spacing:0.594px;">10.0: exist</span>
<span class="t" style="left:1174.30px;top:163.83px;font-size:12.6px;line-height:12.6px;color:#555;letter-spacing:0.496px;">7.0: exist</span>
<div class="b" style="left:0px;top:180px;width:1216px;height:19px;background:#e5e8ea"></div>
<div class="b" style="left:0px;top:199px;width:1216px;height:1px;background:#d9d9d3"></div>
<div class="b" style="left:34px;top:180px;width:1px;height:19px;background:#d9d9d3"></div>
<div class="b" style="left:130px;top:180px;width:1px;height:19px;background:#d9d9d3"></div>
<div class="b" style="left:279px;top:180px;width:1px;height:19px;background:#d9d9d3"></div>
<div class="b" style="left:364px;top:180px;width:1px;height:19px;background:#d9d9d3"></div>
<div class="b" style="left:474px;top:180px;width:1px;height:19px;background:#d9d9d3"></div>
<div class="b" style="left:551px;top:180px;width:1px;height:19px;background:#d9d9d3"></div>
<div class="b" style="left:626px;top:180px;width:1px;height:19px;background:#d9d9d3"></div>
<div class="b" style="left:677px;top:180px;width:1px;height:19px;background:#d9d9d3"></div>
<div class="b" style="left:725px;top:180px;width:1px;height:19px;background:#d9d9d3"></div>
<div class="b" style="left:788px;top:180px;width:1px;height:19px;background:#d9d9d3"></div>
<div class="b" style="left:1039px;top:180px;width:1px;height:19px;background:#d9d9d3"></div>
<div class="b" style="left:1171px;top:180px;width:1px;height:19px;background:#d9d9d3"></div>
<div class="b" style="left:11px;top:183px;width:12px;height:12px;box-sizing:border-box;border:1.5px solid #a0a0a0;border-radius:3px;background:linear-gradient(#f0f0f0,#dadada)"></div>
<span class="t" style="left:37.60px;top:183.83px;font-size:12.6px;line-height:12.6px;color:#333;letter-spacing:0.980px;text-decoration:underline;">000000009</span>
<span class="t" style="left:133.70px;top:183.83px;font-size:12.6px;line-height:12.6px;color:#555;letter-spacing:0.000px;">9</span>
<span class="t" style="left:282.50px;top:183.83px;font-size:12.6px;line-height:12.6px;color:#555;letter-spacing:0.972px;">2244203699</span>
<span class="t" style="left:368.00px;top:183.83px;font-size:12.6px;line-height:12.6px;color:#555;letter-spacing:0.000px;">1</span>
<span class="t" style="left:477.40px;top:183.83px;font-size:12.6px;line-height:12.6px;color:#555;letter-spacing:0.607px;">Department</span>
<span class="t" style="left:728.40px;top:183.83px;font-size:12.6px;line-height:12.6px;color:#555;letter-spacing:0.185px;">Employee</span>
<span class="t" style="left:791.60px;top:183.83px;font-size:12.6px;line-height:12.6px;color:#555;letter-spacing:0.502px;">skm404,ZKTeco,skm10061</span>
<span class="t" style="left:1042.70px;top:183.83px;font-size:12.6px;line-height:12.6px;color:#555;letter-spacing:0.594px;">10.0: exist</span>
<span class="t" style="left:1174.30px;top:183.83px;font-size:12.6px;line-height:12.6px;color:#555;letter-spacing:0.496px;">7.0: exist</span>
<div class="b" style="left:0px;top:200px;width:1216px;height:19px;background:#ffffff"></div>
<div class="b" style="left:0px;top:219px;width:1216px;height:1px;background:#d9d9d3"></div>
<div class="b" style="left:34px;top:200px;width:1px;height:19px;background:#d9d9d3"></div>
<div class="b" style="left:130px;top:200px;width:1px;height:19px;background:#d9d9d3"></div>
<div class="b" style="left:279px;top:200px;width:1px;height:19px;background:#d9d9d3"></div>
<div class="b" style="left:364px;top:200px;width:1px;height:19px;background:#d9d9d3"></div>
<div class="b" style="left:474px;top:200px;width:1px;height:19px;background:#d9d9d3"></div>
<div class="b" style="left:551px;top:200px;width:1px;height:19px;background:#d9d9d3"></div>
<div class="b" style="left:626px;top:200px;width:1px;height:19px;background:#d9d9d3"></div>
<div class="b" style="left:677px;top:200px;width:1px;height:19px;background:#d9d9d3"></div>
<div class="b" style="left:725px;top:200px;width:1px;height:19px;background:#d9d9d3"></div>
<div class="b" style="left:788px;top:200px;width:1px;height:19px;background:#d9d9d3"></div>
<div class="b" style="left:1039px;top:200px;width:1px;height:19px;background:#d9d9d3"></div>
<div class="b" style="left:1171px;top:200px;width:1px;height:19px;background:#d9d9d3"></div>
<div class="b" style="left:11px;top:203px;width:12px;height:12px;box-sizing:border-box;border:1.5px solid #a0a0a0;border-radius:3px;background:linear-gradient(#f0f0f0,#dadada)"></div>
<span class="t" style="left:37.60px;top:203.83px;font-size:12.6px;line-height:12.6px;color:#333;letter-spacing:0.980px;text-decoration:underline;">000000010</span>
<span class="t" style="left:133.70px;top:203.83px;font-size:12.6px;line-height:12.6px;color:#555;letter-spacing:-0.612px;">ABOO BACHER</span>
<span class="t" style="left:282.50px;top:203.83px;font-size:12.6px;line-height:12.6px;color:#555;letter-spacing:0.890px;">86603615</span>
<span class="t" style="left:368.00px;top:203.83px;font-size:12.6px;line-height:12.6px;color:#555;letter-spacing:0.000px;">1</span>
<span class="t" style="left:477.40px;top:203.83px;font-size:12.6px;line-height:12.6px;color:#555;letter-spacing:0.607px;">Department</span>
<span class="t" style="left:728.40px;top:203.83px;font-size:12.6px;line-height:12.6px;color:#555;letter-spacing:0.185px;">Employee</span>
<span class="t" style="left:791.60px;top:203.83px;font-size:12.6px;line-height:12.6px;color:#555;letter-spacing:0.502px;">skm404,ZKTeco,skm10061</span>
<span class="t" style="left:1042.70px;top:203.83px;font-size:12.6px;line-height:12.6px;color:#555;letter-spacing:0.594px;">10.0: exist</span>
<span class="t" style="left:1174.30px;top:203.83px;font-size:12.6px;line-height:12.6px;color:#555;letter-spacing:0.496px;">7.0: exist</span>
<div class="b" style="left:0px;top:220px;width:1216px;height:19px;background:#e5e8ea"></div>
<div class="b" style="left:0px;top:239px;width:1216px;height:1px;background:#d9d9d3"></div>
<div class="b" style="left:34px;top:220px;width:1px;height:19px;background:#d9d9d3"></div>
<div class="b" style="left:130px;top:220px;width:1px;height:19px;background:#d9d9d3"></div>
<div class="b" style="left:279px;top:220px;width:1px;height:19px;background:#d9d9d3"></div>
<div class="b" style="left:364px;top:220px;width:1px;height:19px;background:#d9d9d3"></div>
<div class="b" style="left:474px;top:220px;width:1px;height:19px;background:#d9d9d3"></div>
<div class="b" style="left:551px;top:220px;width:1px;height:19px;background:#d9d9d3"></div>
<div class="b" style="left:626px;top:220px;width:1px;height:19px;background:#d9d9d3"></div>
<div class="b" style="left:677px;top:220px;width:1px;height:19px;background:#d9d9d3"></div>
<div class="b" style="left:725px;top:220px;width:1px;height:19px;background:#d9d9d3"></div>
<div class="b" style="left:788px;top:220px;width:1px;height:19px;background:#d9d9d3"></div>
<div class="b" style="left:1039px;top:220px;width:1px;height:19px;background:#d9d9d3"></div>
<div class="b" style="left:1171px;top:220px;width:1px;height:19px;background:#d9d9d3"></div>
<div class="b" style="left:11px;top:223px;width:12px;height:12px;box-sizing:border-box;border:1.5px solid #a0a0a0;border-radius:3px;background:linear-gradient(#f0f0f0,#dadada)"></div>
<span class="t" style="left:37.60px;top:223.83px;font-size:12.6px;line-height:12.6px;color:#333;letter-spacing:1.098px;text-decoration:underline;">000000011</span>
<span class="t" style="left:133.70px;top:223.83px;font-size:12.6px;line-height:12.6px;color:#555;letter-spacing:1.296px;">11</span>
<span class="t" style="left:368.00px;top:223.83px;font-size:12.6px;line-height:12.6px;color:#555;letter-spacing:0.000px;">1</span>
<span class="t" style="left:477.40px;top:223.83px;font-size:12.6px;line-height:12.6px;color:#555;letter-spacing:0.607px;">Department</span>
<span class="t" style="left:728.40px;top:223.83px;font-size:12.6px;line-height:12.6px;color:#555;letter-spacing:0.185px;">Employee</span>
<span class="t" style="left:791.60px;top:223.83px;font-size:12.6px;line-height:12.6px;color:#555;letter-spacing:0.502px;">skm404,ZKTeco,skm10061</span>
<span class="t" style="left:1042.70px;top:223.83px;font-size:12.6px;line-height:12.6px;color:#555;letter-spacing:0.594px;">10.0: exist</span>
<span class="t" style="left:1174.30px;top:223.83px;font-size:12.6px;line-height:12.6px;color:#555;letter-spacing:0.496px;">7.0: exist</span>
<div class="b" style="left:0px;top:240px;width:1216px;height:19px;background:#ffffff"></div>
<div class="b" style="left:0px;top:259px;width:1216px;height:1px;background:#d9d9d3"></div>
<div class="b" style="left:34px;top:240px;width:1px;height:19px;background:#d9d9d3"></div>
<div class="b" style="left:130px;top:240px;width:1px;height:19px;background:#d9d9d3"></div>
<div class="b" style="left:279px;top:240px;width:1px;height:19px;background:#d9d9d3"></div>
<div class="b" style="left:364px;top:240px;width:1px;height:19px;background:#d9d9d3"></div>
<div class="b" style="left:474px;top:240px;width:1px;height:19px;background:#d9d9d3"></div>
<div class="b" style="left:551px;top:240px;width:1px;height:19px;background:#d9d9d3"></div>
<div class="b" style="left:626px;top:240px;width:1px;height:19px;background:#d9d9d3"></div>
<div class="b" style="left:677px;top:240px;width:1px;height:19px;background:#d9d9d3"></div>
<div class="b" style="left:725px;top:240px;width:1px;height:19px;background:#d9d9d3"></div>
<div class="b" style="left:788px;top:240px;width:1px;height:19px;background:#d9d9d3"></div>
<div class="b" style="left:1039px;top:240px;width:1px;height:19px;background:#d9d9d3"></div>
<div class="b" style="left:1171px;top:240px;width:1px;height:19px;background:#d9d9d3"></div>
<div class="b" style="left:11px;top:243px;width:12px;height:12px;box-sizing:border-box;border:1.5px solid #a0a0a0;border-radius:3px;background:linear-gradient(#f0f0f0,#dadada)"></div>
<span class="t" style="left:37.60px;top:243.83px;font-size:12.6px;line-height:12.6px;color:#333;letter-spacing:0.980px;text-decoration:underline;">000000012</span>
<span class="t" style="left:133.70px;top:243.83px;font-size:12.6px;line-height:12.6px;color:#555;letter-spacing:1.214px;">12</span>
<span class="t" style="left:368.00px;top:243.83px;font-size:12.6px;line-height:12.6px;color:#555;letter-spacing:0.000px;">1</span>
<span class="t" style="left:477.40px;top:243.83px;font-size:12.6px;line-height:12.6px;color:#555;letter-spacing:0.607px;">Department</span>
<span class="t" style="left:728.40px;top:243.83px;font-size:12.6px;line-height:12.6px;color:#555;letter-spacing:0.185px;">Employee</span>
<span class="t" style="left:791.60px;top:243.83px;font-size:12.6px;line-height:12.6px;color:#555;letter-spacing:0.502px;">skm404,ZKTeco,skm10061</span>
<span class="t" style="left:1042.70px;top:243.83px;font-size:12.6px;line-height:12.6px;color:#555;letter-spacing:0.594px;">10.0: exist</span>
<span class="t" style="left:1174.30px;top:243.83px;font-size:12.6px;line-height:12.6px;color:#555;letter-spacing:0.496px;">7.0: exist</span>
<div class="b" style="left:0px;top:260px;width:1216px;height:19px;background:#e5e8ea"></div>
<div class="b" style="left:0px;top:279px;width:1216px;height:1px;background:#d9d9d3"></div>
<div class="b" style="left:34px;top:260px;width:1px;height:19px;background:#d9d9d3"></div>
<div class="b" style="left:130px;top:260px;width:1px;height:19px;background:#d9d9d3"></div>
<div class="b" style="left:279px;top:260px;width:1px;height:19px;background:#d9d9d3"></div>
<div class="b" style="left:364px;top:260px;width:1px;height:19px;background:#d9d9d3"></div>
<div class="b" style="left:474px;top:260px;width:1px;height:19px;background:#d9d9d3"></div>
<div class="b" style="left:551px;top:260px;width:1px;height:19px;background:#d9d9d3"></div>
<div class="b" style="left:626px;top:260px;width:1px;height:19px;background:#d9d9d3"></div>
<div class="b" style="left:677px;top:260px;width:1px;height:19px;background:#d9d9d3"></div>
<div class="b" style="left:725px;top:260px;width:1px;height:19px;background:#d9d9d3"></div>
<div class="b" style="left:788px;top:260px;width:1px;height:19px;background:#d9d9d3"></div>
<div class="b" style="left:1039px;top:260px;width:1px;height:19px;background:#d9d9d3"></div>
<div class="b" style="left:1171px;top:260px;width:1px;height:19px;background:#d9d9d3"></div>
<div class="b" style="left:11px;top:263px;width:12px;height:12px;box-sizing:border-box;border:1.5px solid #a0a0a0;border-radius:3px;background:linear-gradient(#f0f0f0,#dadada)"></div>
<span class="t" style="left:37.60px;top:263.83px;font-size:12.6px;line-height:12.6px;color:#333;letter-spacing:0.980px;text-decoration:underline;">000000013</span>
<span class="t" style="left:133.70px;top:263.83px;font-size:12.6px;line-height:12.6px;color:#555;letter-spacing:1.214px;">13</span>
<span class="t" style="left:368.00px;top:263.83px;font-size:12.6px;line-height:12.6px;color:#555;letter-spacing:0.000px;">1</span>
<span class="t" style="left:477.40px;top:263.83px;font-size:12.6px;line-height:12.6px;color:#555;letter-spacing:0.607px;">Department</span>
<span class="t" style="left:728.40px;top:263.83px;font-size:12.6px;line-height:12.6px;color:#555;letter-spacing:0.185px;">Employee</span>
<span class="t" style="left:791.60px;top:263.83px;font-size:12.6px;line-height:12.6px;color:#555;letter-spacing:0.502px;">skm404,ZKTeco,skm10061</span>
<span class="t" style="left:1042.70px;top:263.83px;font-size:12.6px;line-height:12.6px;color:#555;letter-spacing:0.594px;">10.0: exist</span>
<span class="t" style="left:1174.30px;top:263.83px;font-size:12.6px;line-height:12.6px;color:#555;letter-spacing:0.496px;">7.0: exist</span>
<div class="b" style="left:0px;top:280px;width:1216px;height:19px;background:#ffffff"></div>
<div class="b" style="left:0px;top:299px;width:1216px;height:1px;background:#d9d9d3"></div>
<div class="b" style="left:34px;top:280px;width:1px;height:19px;background:#d9d9d3"></div>
<div class="b" style="left:130px;top:280px;width:1px;height:19px;background:#d9d9d3"></div>
<div class="b" style="left:279px;top:280px;width:1px;height:19px;background:#d9d9d3"></div>
<div class="b" style="left:364px;top:280px;width:1px;height:19px;background:#d9d9d3"></div>
<div class="b" style="left:474px;top:280px;width:1px;height:19px;background:#d9d9d3"></div>
<div class="b" style="left:551px;top:280px;width:1px;height:19px;background:#d9d9d3"></div>
<div class="b" style="left:626px;top:280px;width:1px;height:19px;background:#d9d9d3"></div>
<div class="b" style="left:677px;top:280px;width:1px;height:19px;background:#d9d9d3"></div>
<div class="b" style="left:725px;top:280px;width:1px;height:19px;background:#d9d9d3"></div>
<div class="b" style="left:788px;top:280px;width:1px;height:19px;background:#d9d9d3"></div>
<div class="b" style="left:1039px;top:280px;width:1px;height:19px;background:#d9d9d3"></div>
<div class="b" style="left:1171px;top:280px;width:1px;height:19px;background:#d9d9d3"></div>
<div class="b" style="left:11px;top:283px;width:12px;height:12px;box-sizing:border-box;border:1.5px solid #a0a0a0;border-radius:3px;background:linear-gradient(#f0f0f0,#dadada)"></div>
<span class="t" style="left:37.60px;top:283.83px;font-size:12.6px;line-height:12.6px;color:#333;letter-spacing:0.980px;text-decoration:underline;">000000014</span>
<span class="t" style="left:133.70px;top:283.83px;font-size:12.6px;line-height:12.6px;color:#555;letter-spacing:1.214px;">14</span>
<span class="t" style="left:368.00px;top:283.83px;font-size:12.6px;line-height:12.6px;color:#555;letter-spacing:0.000px;">1</span>
<span class="t" style="left:477.40px;top:283.83px;font-size:12.6px;line-height:12.6px;color:#555;letter-spacing:0.607px;">Department</span>
<span class="t" style="left:728.40px;top:283.83px;font-size:12.6px;line-height:12.6px;color:#555;letter-spacing:0.185px;">Employee</span>
<span class="t" style="left:791.60px;top:283.83px;font-size:12.6px;line-height:12.6px;color:#555;letter-spacing:0.502px;">skm404,ZKTeco,skm10061</span>
<span class="t" style="left:1042.70px;top:283.83px;font-size:12.6px;line-height:12.6px;color:#555;letter-spacing:0.594px;">10.0: exist</span>
<span class="t" style="left:1174.30px;top:283.83px;font-size:12.6px;line-height:12.6px;color:#555;letter-spacing:0.496px;">7.0: exist</span>
<div class="b" style="left:0px;top:300px;width:1216px;height:19px;background:#e5e8ea"></div>
<div class="b" style="left:0px;top:319px;width:1216px;height:1px;background:#d9d9d3"></div>
<div class="b" style="left:34px;top:300px;width:1px;height:19px;background:#d9d9d3"></div>
<div class="b" style="left:130px;top:300px;width:1px;height:19px;background:#d9d9d3"></div>
<div class="b" style="left:279px;top:300px;width:1px;height:19px;background:#d9d9d3"></div>
<div class="b" style="left:364px;top:300px;width:1px;height:19px;background:#d9d9d3"></div>
<div class="b" style="left:474px;top:300px;width:1px;height:19px;background:#d9d9d3"></div>
<div class="b" style="left:551px;top:300px;width:1px;height:19px;background:#d9d9d3"></div>
<div class="b" style="left:626px;top:300px;width:1px;height:19px;background:#d9d9d3"></div>
<div class="b" style="left:677px;top:300px;width:1px;height:19px;background:#d9d9d3"></div>
<div class="b" style="left:725px;top:300px;width:1px;height:19px;background:#d9d9d3"></div>
<div class="b" style="left:788px;top:300px;width:1px;height:19px;background:#d9d9d3"></div>
<div class="b" style="left:1039px;top:300px;width:1px;height:19px;background:#d9d9d3"></div>
<div class="b" style="left:1171px;top:300px;width:1px;height:19px;background:#d9d9d3"></div>
<div class="b" style="left:11px;top:303px;width:12px;height:12px;box-sizing:border-box;border:1.5px solid #a0a0a0;border-radius:3px;background:linear-gradient(#f0f0f0,#dadada)"></div>
<span class="t" style="left:37.60px;top:303.83px;font-size:12.6px;line-height:12.6px;color:#333;letter-spacing:0.980px;text-decoration:underline;">000000015</span>
<span class="t" style="left:133.70px;top:303.83px;font-size:12.6px;line-height:12.6px;color:#555;letter-spacing:1.214px;">15</span>
<span class="t" style="left:368.00px;top:303.83px;font-size:12.6px;line-height:12.6px;color:#555;letter-spacing:0.000px;">1</span>
<span class="t" style="left:477.40px;top:303.83px;font-size:12.6px;line-height:12.6px;color:#555;letter-spacing:0.607px;">Department</span>
<span class="t" style="left:728.40px;top:303.83px;font-size:12.6px;line-height:12.6px;color:#555;letter-spacing:0.185px;">Employee</span>
<span class="t" style="left:791.60px;top:303.83px;font-size:12.6px;line-height:12.6px;color:#555;letter-spacing:0.730px;">skm404,skm10061</span>
<span class="t" style="left:1042.70px;top:303.83px;font-size:12.6px;line-height:12.6px;color:#555;letter-spacing:-0.071px;">None</span>
<span class="t" style="left:1174.30px;top:303.83px;font-size:12.6px;line-height:12.6px;color:#555;letter-spacing:-0.071px;">None</span>
<div class="b" style="left:0px;top:320px;width:1216px;height:19px;background:#ffffff"></div>
<div class="b" style="left:0px;top:339px;width:1216px;height:1px;background:#d9d9d3"></div>
<div class="b" style="left:34px;top:320px;width:1px;height:19px;background:#d9d9d3"></div>
<div class="b" style="left:130px;top:320px;width:1px;height:19px;background:#d9d9d3"></div>
<div class="b" style="left:279px;top:320px;width:1px;height:19px;background:#d9d9d3"></div>
<div class="b" style="left:364px;top:320px;width:1px;height:19px;background:#d9d9d3"></div>
<div class="b" style="left:474px;top:320px;width:1px;height:19px;background:#d9d9d3"></div>
<div class="b" style="left:551px;top:320px;width:1px;height:19px;background:#d9d9d3"></div>
<div class="b" style="left:626px;top:320px;width:1px;height:19px;background:#d9d9d3"></div>
<div class="b" style="left:677px;top:320px;width:1px;height:19px;background:#d9d9d3"></div>
<div class="b" style="left:725px;top:320px;width:1px;height:19px;background:#d9d9d3"></div>
<div class="b" style="left:788px;top:320px;width:1px;height:19px;background:#d9d9d3"></div>
<div class="b" style="left:1039px;top:320px;width:1px;height:19px;background:#d9d9d3"></div>
<div class="b" style="left:1171px;top:320px;width:1px;height:19px;background:#d9d9d3"></div>
<div class="b" style="left:11px;top:323px;width:12px;height:12px;box-sizing:border-box;border:1.5px solid #a0a0a0;border-radius:3px;background:linear-gradient(#f0f0f0,#dadada)"></div>
<span class="t" style="left:37.60px;top:323.83px;font-size:12.6px;line-height:12.6px;color:#333;letter-spacing:0.980px;text-decoration:underline;">000000016</span>
<span class="t" style="left:133.70px;top:323.83px;font-size:12.6px;line-height:12.6px;color:#555;letter-spacing:1.214px;">16</span>
<span class="t" style="left:368.00px;top:323.83px;font-size:12.6px;line-height:12.6px;color:#555;letter-spacing:0.000px;">1</span>
<span class="t" style="left:477.40px;top:323.83px;font-size:12.6px;line-height:12.6px;color:#555;letter-spacing:0.607px;">Department</span>
<span class="t" style="left:728.40px;top:323.83px;font-size:12.6px;line-height:12.6px;color:#555;letter-spacing:0.185px;">Employee</span>
<span class="t" style="left:791.60px;top:323.83px;font-size:12.6px;line-height:12.6px;color:#555;letter-spacing:0.730px;">skm404,skm10061</span>
<span class="t" style="left:1042.70px;top:323.83px;font-size:12.6px;line-height:12.6px;color:#555;letter-spacing:0.594px;">10.0: exist</span>
<span class="t" style="left:1174.30px;top:323.83px;font-size:12.6px;line-height:12.6px;color:#555;letter-spacing:-0.071px;">None</span>
<div class="b" style="left:0px;top:340px;width:1216px;height:19px;background:#e5e8ea"></div>
<div class="b" style="left:0px;top:359px;width:1216px;height:1px;background:#d9d9d3"></div>
<div class="b" style="left:34px;top:340px;width:1px;height:19px;background:#d9d9d3"></div>
<div class="b" style="left:130px;top:340px;width:1px;height:19px;background:#d9d9d3"></div>
<div class="b" style="left:279px;top:340px;width:1px;height:19px;background:#d9d9d3"></div>
<div class="b" style="left:364px;top:340px;width:1px;height:19px;background:#d9d9d3"></div>
<div class="b" style="left:474px;top:340px;width:1px;height:19px;background:#d9d9d3"></div>
<div class="b" style="left:551px;top:340px;width:1px;height:19px;background:#d9d9d3"></div>
<div class="b" style="left:626px;top:340px;width:1px;height:19px;background:#d9d9d3"></div>
<div class="b" style="left:677px;top:340px;width:1px;height:19px;background:#d9d9d3"></div>
<div class="b" style="left:725px;top:340px;width:1px;height:19px;background:#d9d9d3"></div>
<div class="b" style="left:788px;top:340px;width:1px;height:19px;background:#d9d9d3"></div>
<div class="b" style="left:1039px;top:340px;width:1px;height:19px;background:#d9d9d3"></div>
<div class="b" style="left:1171px;top:340px;width:1px;height:19px;background:#d9d9d3"></div>
<div class="b" style="left:11px;top:343px;width:12px;height:12px;box-sizing:border-box;border:1.5px solid #a0a0a0;border-radius:3px;background:linear-gradient(#f0f0f0,#dadada)"></div>
<span class="t" style="left:37.60px;top:343.83px;font-size:12.6px;line-height:12.6px;color:#333;letter-spacing:0.980px;text-decoration:underline;">000000017</span>
<span class="t" style="left:133.70px;top:343.83px;font-size:12.6px;line-height:12.6px;color:#555;letter-spacing:1.214px;">17</span>
<span class="t" style="left:368.00px;top:343.83px;font-size:12.6px;line-height:12.6px;color:#555;letter-spacing:0.000px;">1</span>
<span class="t" style="left:477.40px;top:343.83px;font-size:12.6px;line-height:12.6px;color:#555;letter-spacing:0.607px;">Department</span>
<span class="t" style="left:728.40px;top:343.83px;font-size:12.6px;line-height:12.6px;color:#555;letter-spacing:0.185px;">Employee</span>
<span class="t" style="left:791.60px;top:343.83px;font-size:12.6px;line-height:12.6px;color:#555;letter-spacing:0.502px;">skm404,ZKTeco,skm10061</span>
<span class="t" style="left:1042.70px;top:343.83px;font-size:12.6px;line-height:12.6px;color:#555;letter-spacing:0.594px;">10.0: exist</span>
<span class="t" style="left:1174.30px;top:343.83px;font-size:12.6px;line-height:12.6px;color:#555;letter-spacing:0.496px;">7.0: exist</span>
<div class="b" style="left:0px;top:360px;width:1216px;height:19px;background:#ffffff"></div>
<div class="b" style="left:0px;top:379px;width:1216px;height:1px;background:#d9d9d3"></div>
<div class="b" style="left:34px;top:360px;width:1px;height:19px;background:#d9d9d3"></div>
<div class="b" style="left:130px;top:360px;width:1px;height:19px;background:#d9d9d3"></div>
<div class="b" style="left:279px;top:360px;width:1px;height:19px;background:#d9d9d3"></div>
<div class="b" style="left:364px;top:360px;width:1px;height:19px;background:#d9d9d3"></div>
<div class="b" style="left:474px;top:360px;width:1px;height:19px;background:#d9d9d3"></div>
<div class="b" style="left:551px;top:360px;width:1px;height:19px;background:#d9d9d3"></div>
<div class="b" style="left:626px;top:360px;width:1px;height:19px;background:#d9d9d3"></div>
<div class="b" style="left:677px;top:360px;width:1px;height:19px;background:#d9d9d3"></div>
<div class="b" style="left:725px;top:360px;width:1px;height:19px;background:#d9d9d3"></div>
<div class="b" style="left:788px;top:360px;width:1px;height:19px;background:#d9d9d3"></div>
<div class="b" style="left:1039px;top:360px;width:1px;height:19px;background:#d9d9d3"></div>
<div class="b" style="left:1171px;top:360px;width:1px;height:19px;background:#d9d9d3"></div>
<div class="b" style="left:11px;top:363px;width:12px;height:12px;box-sizing:border-box;border:1.5px solid #a0a0a0;border-radius:3px;background:linear-gradient(#f0f0f0,#dadada)"></div>
<span class="t" style="left:37.60px;top:363.83px;font-size:12.6px;line-height:12.6px;color:#333;letter-spacing:0.980px;text-decoration:underline;">000000018</span>
<span class="t" style="left:133.70px;top:363.83px;font-size:12.6px;line-height:12.6px;color:#555;letter-spacing:1.214px;">18</span>
<span class="t" style="left:368.00px;top:363.83px;font-size:12.6px;line-height:12.6px;color:#555;letter-spacing:0.000px;">1</span>
<span class="t" style="left:477.40px;top:363.83px;font-size:12.6px;line-height:12.6px;color:#555;letter-spacing:0.607px;">Department</span>
<span class="t" style="left:728.40px;top:363.83px;font-size:12.6px;line-height:12.6px;color:#555;letter-spacing:0.185px;">Employee</span>
<span class="t" style="left:791.60px;top:363.83px;font-size:12.6px;line-height:12.6px;color:#555;letter-spacing:0.502px;">skm404,ZKTeco,skm10061</span>
<span class="t" style="left:1042.70px;top:363.83px;font-size:12.6px;line-height:12.6px;color:#555;letter-spacing:0.594px;">10.0: exist</span>
<span class="t" style="left:1174.30px;top:363.83px;font-size:12.6px;line-height:12.6px;color:#555;letter-spacing:0.496px;">7.0: exist</span>
<div class="b" style="left:0px;top:380px;width:1216px;height:2px;background:#e5e8ea"></div>
<div class="b" style="left:34px;top:380px;width:1px;height:2px;background:#d9d9d3"></div>
<div class="b" style="left:130px;top:380px;width:1px;height:2px;background:#d9d9d3"></div>
<div class="b" style="left:279px;top:380px;width:1px;height:2px;background:#d9d9d3"></div>
<div class="b" style="left:364px;top:380px;width:1px;height:2px;background:#d9d9d3"></div>
<div class="b" style="left:474px;top:380px;width:1px;height:2px;background:#d9d9d3"></div>
<div class="b" style="left:551px;top:380px;width:1px;height:2px;background:#d9d9d3"></div>
<div class="b" style="left:626px;top:380px;width:1px;height:2px;background:#d9d9d3"></div>
<div class="b" style="left:677px;top:380px;width:1px;height:2px;background:#d9d9d3"></div>
<div class="b" style="left:725px;top:380px;width:1px;height:2px;background:#d9d9d3"></div>
<div class="b" style="left:788px;top:380px;width:1px;height:2px;background:#d9d9d3"></div>
<div class="b" style="left:1039px;top:380px;width:1px;height:2px;background:#d9d9d3"></div>
<div class="b" style="left:1171px;top:380px;width:1px;height:2px;background:#d9d9d3"></div>
</div>
<div class="b" style="left:1394px;top:268px;width:17px;height:382px;background:#f1f1f1"></div>
<svg class="b" style="left:1398px;top:273px" width="9" height="6" viewBox="0 0 9 6"><path d="M1,5 H8 L4.5,1 Z" fill="#a3a3a3"/></svg>
<div class="b" style="left:1396px;top:284px;width:13px;height:333px;background:#c1c1c1"></div>
<svg class="b" style="left:1398px;top:638px" width="9" height="6" viewBox="0 0 9 6"><path d="M1,1 H8 L4.5,5 Z" fill="#505050"/></svg>
<div class="b" style="left:177px;top:650px;width:1217px;height:17px;background:#f1f1f1"></div>
<svg class="b" style="left:181px;top:654px" width="9" height="9" viewBox="0 0 9 9"><path d="M6,1 V8 L2,4.5 Z" fill="#a3a3a3"/></svg>
<div class="b" style="left:194px;top:652px;width:1070px;height:13px;background:#c1c1c1"></div>
<svg class="b" style="left:1382px;top:654px" width="9" height="9" viewBox="0 0 9 9"><path d="M2,1 V8 L6,4.5 Z" fill="#505050"/></svg>
<div class="b" style="left:1394px;top:650px;width:17px;height:17px;background:#fff"></div>
</body></html>
